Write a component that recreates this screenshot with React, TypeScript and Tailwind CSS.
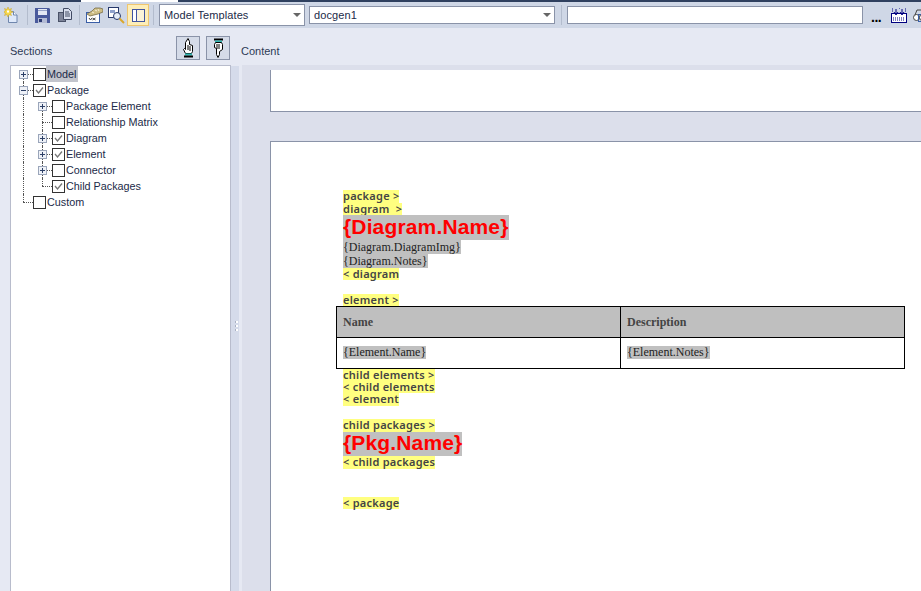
import React from "react";

const ui = "font-['Liberation_Sans',Arial,sans-serif]";

function NewIcon() {
  return (
    <svg width="14" height="16" viewBox="0 0 14 16">
      <path d="M4.500 4.500h5l3.500 3.500v7.500h-8.500z" fill="#dfe9fa" stroke="#6f86ad" />
      <path d="M9.500 4.500v3.500h3.500" fill="#fff" stroke="#6f86ad" />
      <path d="M4 0l1 2.500 2.500-1-1 2.500 2.500 1-2.500 1 1 2.500-2.500-1-1 2.500-1-2.500-2.500 1 1-2.500-2.500-1 2.500-1-1-2.500 2.500 1z" fill="#f7d84a" stroke="#c9a227" strokeWidth="0.500" />
      <rect x="3" y="3.500" width="2" height="2" fill="#fff" />
    </svg>
  );
}

function SaveIcon() {
  return (
    <svg width="15" height="15" viewBox="0 0 15 15">
      <path d="M0 0h14l1 1v14H0z" fill="#4a5a9c" />
      <rect x="3" y="1" width="9" height="6" fill="#e4e8f4" />
      <rect x="3" y="2" width="9" height="1" fill="#98a4c8" />
      <rect x="3" y="10" width="9" height="5" fill="#b4bbd4" />
      <rect x="4" y="11" width="3" height="3" fill="#2c3a72" />
    </svg>
  );
}

function CopyIcon() {
  return (
    <svg width="14" height="14" viewBox="0 0 14 14">
      <rect x="0.500" y="4.500" width="7" height="9" fill="#7c8398" stroke="#4a5268" />
      <path d="M5.500.500h5l3 3v8h-8z" fill="#d7dded" stroke="#414a63" />
      <path d="M7 4h4M7 6h5M7 8h5" stroke="#414a63" />
    </svg>
  );
}

function ReportIcon() {
  return (
    <svg width="17" height="16" viewBox="0 0 17 16">
      <rect x="0.500" y="5.500" width="13" height="10" fill="#fff" stroke="#3a5ea6" />
      <path d="M3 11l1.500 2 1.500-2M6.500 11l3 2M9.500 11l-3 2" fill="none" stroke="#444" />
      <path d="M1 7l5-3 3-3h5l3 1v3l-5 2-4 1-4 1z" fill="#cdbd86" stroke="#6a5e38" strokeWidth="0.700" />
      <path d="M6 5l2 1M9 3l2 1M12 2l1 2" stroke="#f5efd8" />
    </svg>
  );
}

function FindIcon() {
  return (
    <svg width="17" height="17" viewBox="0 0 17 17">
      <rect x="0.500" y="0.500" width="10" height="10" fill="#fff" stroke="#27396b" />
      <rect x="2" y="3" width="5" height="3" fill="#8fa2cc" />
      <circle cx="9" cy="9" r="3.500" fill="#e5edf8" stroke="#27396b" />
      <path d="M11.500 11.500l4.500 4.500" stroke="#d9a82e" strokeWidth="2" />
    </svg>
  );
}

function PanelIcon() {
  return (
    <svg width="13" height="13" viewBox="0 0 13 13">
      <rect x="0.500" y="0.500" width="12" height="12" fill="#fbf3d8" stroke="#4255a0" />
      <rect x="1" y="1" width="4" height="11" fill="#fff" />
      <path d="M4.500 1v11" stroke="#4255a0" />
    </svg>
  );
}

function HandUp() {
  return (
    <svg width="11" height="20" viewBox="0 0 11 20">
      <path d="M5 .500l1.500 3v3l3 1v6l-1 2h-6l-2-4 1-1 1 1v-7z" fill="#fff" stroke="#000" />
      <path d="M5 7v5M7 8v5" stroke="#000" />
      <rect x="2" y="15.500" width="7" height="2" fill="#2fb7b0" />
      <rect x="1" y="17.500" width="9" height="2" fill="#000" />
    </svg>
  );
}

function HandDown() {
  return (
    <svg width="11" height="20" viewBox="0 0 11 20">
      <rect x="1" y="0.500" width="9" height="2" fill="#000" />
      <rect x="2" y="2.500" width="7" height="2" fill="#2fb7b0" />
      <path d="M2.500 4.500h6l1 2v5l-3 2v3l-1.500 3-1.500-3v-6l-2-1v-3z" fill="#fff" stroke="#000" />
      <path d="M4 6v5M6 6v5" stroke="#000" />
    </svg>
  );
}

function KeyboardIcon() {
  return (
    <svg width="16" height="15" viewBox="0 0 16 15">
      <rect x="0.500" y="5.500" width="15" height="9" fill="#fff" stroke="#000080" />
      <path d="M5 1v5M3 4l2 3 2-3M11 1v5M9 4l2 3 2-3" fill="none" stroke="#000080" />
      <path d="M2 10h12M2 12h12" stroke="#000080" strokeDasharray="1 1" />
      <path d="M1 1h1M8 0h1M14 1h1M1 3h1M14 3h1" stroke="#000080" />
    </svg>
  );
}

function BinocularIcon() {
  return (
    <svg width="14" height="15" viewBox="0 0 14 15" className="block">
      <circle cx="3.500" cy="9.500" r="3" fill="#fff" stroke="#444" />
      <circle cx="9.500" cy="9.500" r="3" fill="#fff" stroke="#444" />
      <path d="M2 7l2-5h6l2 5" fill="none" stroke="#444" />
      <rect x="5.500" y="6.500" width="8" height="7" fill="none" stroke="#3a5ea6" />
    </svg>
  );
}

function ChevronDown() {
  return <span className="block w-0 h-0 border-x-[4px] border-x-transparent border-t-[4px] border-t-[#666]" />;
}

function Sep() {
  return <div className="w-px h-[20px] bg-[#b3bccd] shrink-0" />;
}

function Combo({ label, className }: { label: string; className: string }) {
  return (
    <div className={`flex items-center justify-between bg-white border border-[#8a93a8] pl-1 pr-[3px] shrink-0 text-[11px] tracking-[0.1px] text-[#1b2a48] ${className}`}>
      <span>{label}</span>
      <ChevronDown />
    </div>
  );
}

function Toolbar() {
  return (
    <div className="flex items-center h-[26px] bg-[#cfd7e6] shrink-0 overflow-hidden">
      <div className="ml-1 shrink-0"><NewIcon /></div>
      <div className="ml-[9px] shrink-0"><Sep /></div>
      <div className="ml-[7px] shrink-0"><SaveIcon /></div>
      <div className="ml-2 shrink-0"><CopyIcon /></div>
      <div className="ml-[7px] shrink-0"><Sep /></div>
      <div className="ml-[6px] shrink-0"><ReportIcon /></div>
      <div className="ml-[5px] shrink-0"><FindIcon /></div>
      <div className="ml-[2px] w-[22px] h-[22px] flex items-center justify-center bg-[#fdeeb8] border border-[#efc66f] shrink-0">
        <PanelIcon />
      </div>
      <div className="ml-1 shrink-0"><Sep /></div>
      <Combo label="Model Templates" className="ml-[5px] w-[146px] h-[22px]" />
      <Combo label="docgen1" className="ml-1 w-[246px] h-[18px]" />
      <div className="ml-[6px] shrink-0"><Sep /></div>
      <div className="ml-[5px] w-[296px] h-[18px] bg-white border border-[#8a93a8] shrink-0" />
      <span className="ml-2 w-[11px] text-[14px] leading-none font-bold text-black shrink-0 tracking-[-0.5px] mt-1">...</span>
      <div className="ml-[9px] shrink-0"><KeyboardIcon /></div>
      <div className="ml-[6px] shrink-0"><BinocularIcon /></div>
    </div>
  );
}

type Row = {
  label: string;
  level: 0 | 1;
  checked?: boolean;
  expander?: "plus" | "minus";
  selected?: boolean;
  trunk: "lower" | "full" | "upper";
  branch?: "lower" | "full" | "upper";
};

const rows: Row[] = [
  { label: "Model", level: 0, expander: "plus", selected: true, trunk: "lower" },
  { label: "Package", level: 0, checked: true, expander: "minus", trunk: "full" },
  { label: "Package Element", level: 1, expander: "plus", trunk: "full", branch: "lower" },
  { label: "Relationship Matrix", level: 1, trunk: "full", branch: "full" },
  { label: "Diagram", level: 1, checked: true, expander: "plus", trunk: "full", branch: "full" },
  { label: "Element", level: 1, checked: true, expander: "plus", trunk: "full", branch: "full" },
  { label: "Connector", level: 1, expander: "plus", trunk: "full", branch: "full" },
  { label: "Child Packages", level: 1, checked: true, trunk: "full", branch: "upper" },
  { label: "Custom", level: 0, trunk: "upper" },
];

function Expander({ kind }: { kind: "plus" | "minus" }) {
  return (
    <svg width="9" height="9" viewBox="0 0 9 9" className="block">
      <rect x="0.500" y="0.500" width="8" height="8" fill="#eef1f7" stroke="#9aa5ba" />
      <path d={kind === "plus" ? "M2 4.500h5M4.500 2v5" : "M2 4.500h5"} stroke="#2c3f66" />
    </svg>
  );
}

function Check({ checked }: { checked?: boolean }) {
  return (
    <div className="relative w-[13px] h-[13px] bg-white border border-[#333] shrink-0">
      {checked && (
        <svg width="11" height="11" viewBox="0 0 11 11" className="block">
          <path d="M2 5l2.500 3L9 2.500" fill="none" stroke="#777" strokeWidth="1.300" />
        </svg>
      )}
    </div>
  );
}

function TreeRow({ row }: { row: Row }) {
  const indent = row.level === 0 ? "w-[22px]" : "w-[41px]";
  return (
    <div className="relative flex items-center h-4">
      {row.trunk === "lower" && <span className="absolute left-3 top-2 h-2 border-l border-dotted border-[#555]" />}
      {row.trunk === "full" && <span className="absolute left-3 top-0 h-4 border-l border-dotted border-[#555]" />}
      {row.trunk === "upper" && <span className="absolute left-3 top-0 h-2 border-l border-dotted border-[#555]" />}
      {row.branch === "lower" && <span className="absolute left-[31px] top-2 h-2 border-l border-dotted border-[#555]" />}
      {row.branch === "full" && <span className="absolute left-[31px] top-0 h-4 border-l border-dotted border-[#555]" />}
      {row.branch === "upper" && <span className="absolute left-[31px] top-0 h-2 border-l border-dotted border-[#555]" />}
      {row.level === 0 ? (
        <span className="absolute left-3 top-2 w-[10px] border-t border-dotted border-[#555]" />
      ) : (
        <span className="absolute left-[31px] top-2 w-[10px] border-t border-dotted border-[#555]" />
      )}
      {row.expander && (
        <span className={`absolute top-1 ${row.level === 0 ? "left-2" : "left-[27px]"}`}>
          <Expander kind={row.expander} />
        </span>
      )}
      <div className={`${indent} shrink-0`} />
      <Check checked={row.checked} />
      <span className={`h-4 leading-4 text-[10.800px] text-[#1b2a48] whitespace-nowrap ${row.selected ? "bg-[#c2c4cc] pl-px pr-[2px]" : "pl-px"}`}>
        {row.label}
      </span>
    </div>
  );
}

function Grip() {
  return (
    <div className="flex flex-col gap-[2px]">
      <span className="block w-[3px] h-[2px] bg-white border-l border-[#a9b0c2]" />
      <span className="block w-[3px] h-[2px] bg-white border-l border-[#a9b0c2]" />
      <span className="block w-[3px] h-[2px] bg-white border-l border-[#a9b0c2]" />
    </div>
  );
}

function Tag({ children, h = "h-3" }: { children: React.ReactNode; h?: string }) {
  return (
    <div className={`${h} pl-[7px] flex`}>
      <span className={`${h} bg-[#ffff80] text-[#444] text-[11px] tracking-[0.25px] leading-[12px] font-semibold font-['Noto_Sans',sans-serif] whitespace-nowrap`}>
        {children}
      </span>
    </div>
  );
}

function Field({ children }: { children: React.ReactNode }) {
  return (
    <div className="h-[14px] pl-[7px] flex">
      <span className="h-[14px] bg-[#c0c0c0] text-[#222] text-[12px] leading-[14px] font-['Liberation_Serif',serif] whitespace-nowrap">
        {children}
      </span>
    </div>
  );
}

function Heading({ children, h }: { children: React.ReactNode; h: string }) {
  return (
    <div className={`${h} pl-[7px] flex`}>
      <span className={`${h} flex items-center pb-[2px] bg-[#c0c0c0] text-[#ff0000] text-[21px] tracking-[0.15px] font-bold font-['Liberation_Sans',sans-serif] whitespace-nowrap`}>
        {children}
      </span>
    </div>
  );
}

function ElementTable() {
  return (
    <div className="w-[569px] grid grid-cols-[284px_283px] border border-black bg-white font-['Liberation_Serif',serif]">
      <div className="h-[31px] flex items-center px-[6px] bg-[#bfbfbf] border-r border-b border-black text-[12px] font-bold text-[#444]">Name</div>
      <div className="h-[31px] flex items-center px-[6px] bg-[#bfbfbf] border-b border-black text-[12px] font-bold text-[#444]">Description</div>
      <div className="h-[30px] flex items-center px-[6px] pb-[2px] border-r border-black">
        <span className="bg-[#c0c0c0] text-[12px] leading-[13px] text-[#222]">{"{Element.Name}"}</span>
      </div>
      <div className="h-[30px] flex items-center px-[6px] pb-[2px]">
        <span className="bg-[#c0c0c0] text-[12px] leading-[13px] text-[#222]">{"{Element.Notes}"}</span>
      </div>
    </div>
  );
}

export default function App() {
  return (
    <div className={`w-[921px] h-[591px] overflow-hidden flex flex-col bg-[#e6e9f3] ${ui}`}>
      <div className="flex h-[2px] shrink-0 bg-[#2f405f]">
        <div className="w-[81px]" />
        <div className="w-[97px] bg-white" />
      </div>
      <Toolbar />
      <div className="flex h-[37px] shrink-0 items-center text-[11px] text-[#2d3a55]">
        <span className="w-[176px] pl-[10px] mt-[9px]">Sections</span>
        <div className="w-[24px] h-[24px] flex items-center justify-center bg-[#d5dbe8] border border-[#8a93a8] shrink-0 mt-[3px]"><HandUp /></div>
        <div className="ml-[6px] w-[24px] h-[24px] flex items-center justify-center bg-[#d5dbe8] border border-[#8a93a8] shrink-0 mt-[3px]"><HandDown /></div>
        <span className="ml-[11px] mt-[9px]">Content</span>
      </div>
      <div className="flex flex-1 min-h-0">
        <div className="ml-[10px] w-[221px] bg-white border-l border-t border-r border-[#b8bccc] shrink-0 -mb-px">
          {rows.map((row) => (
            <TreeRow key={row.label} row={row} />
          ))}
        </div>
        <div className="w-[8px] bg-[#d5dbea] flex items-center justify-center pl-[2px] pb-[6px] shrink-0 mt-px">
          <Grip />
        </div>
        <div className="w-[3px] bg-[#e6e9f3] shrink-0" />
        <div className="flex-1 min-w-0 bg-[#dcdfeb] pt-[5px] pl-[28px] flex flex-col">
          <div className="h-[42px] bg-white border-l border-b border-[#8a93a8] shrink-0" />
          <div className="mt-[29px] flex-1 bg-white border-l border-t border-[#8a93a8] pl-[65px] pt-[48px]">
            <Tag h="h-[13px]">package &gt;</Tag>
            <Tag>diagram &nbsp;&gt;</Tag>
            <Heading h="h-[25px]">{"{Diagram.Name}"}</Heading>
            <Field>{"{Diagram.DiagramImg}"}</Field>
            <Field>{"{Diagram.Notes}"}</Field>
            <Tag>&lt; diagram</Tag>
            <div className="h-[14px]" />
            <Tag>element &gt;</Tag>
            <ElementTable />
            <Tag>child elements &gt;</Tag>
            <Tag>&lt; child elements</Tag>
            <Tag h="h-[13px]">&lt; element</Tag>
            <div className="h-[13px]" />
            <Tag h="h-[13px]">child packages &gt;</Tag>
            <Heading h="h-[24px]">{"{Pkg.Name}"}</Heading>
            <Tag h="h-[13px]">&lt; child packages</Tag>
            <div className="h-[28px]" />
            <Tag>&lt; package</Tag>
          </div>
        </div>
      </div>
    </div>
  );
}
